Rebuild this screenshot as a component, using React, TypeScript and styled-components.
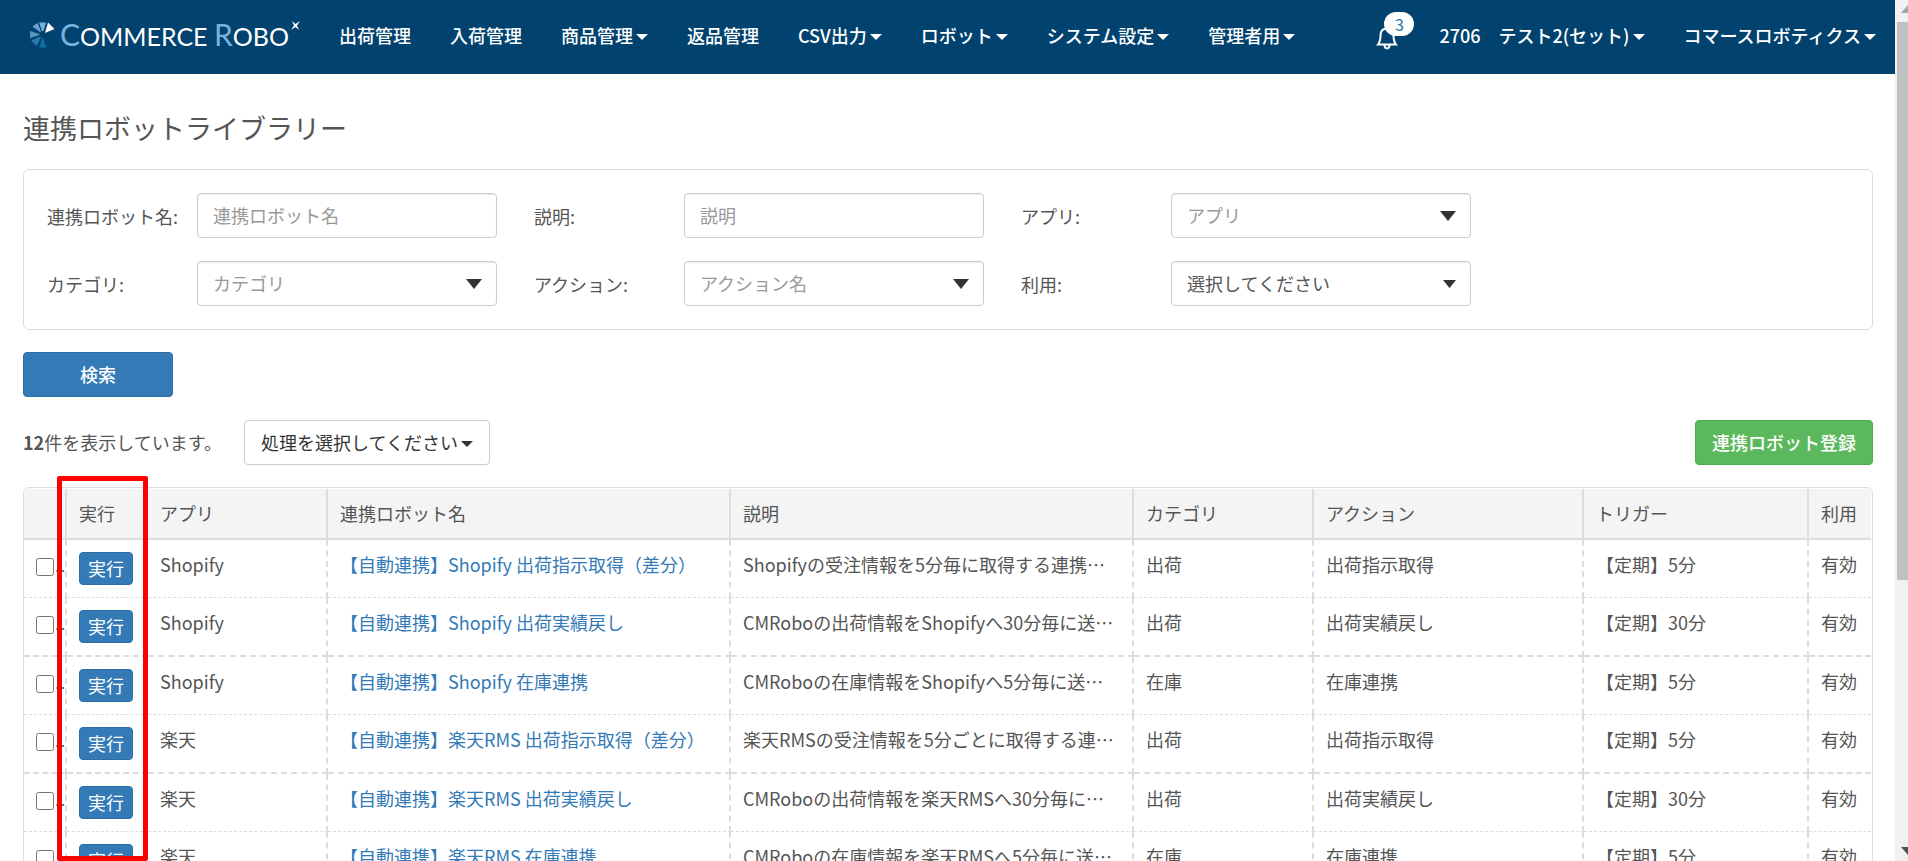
import React from "react";
import styled, { createGlobalStyle, css } from "styled-components";

const GlobalStyle = createGlobalStyle`
  *, *::before, *::after { box-sizing: border-box; }
  html, body { margin: 0; padding: 0; background: #fff; }
  body, button, input, select {
    font-family: "Noto Sans CJK JP", "Noto Sans", sans-serif;
    font-size: 18px;
    line-height: 26px;
    color: #555;
  }
  a { color: #337ab7; text-decoration: none; }
`;

const Shell = styled.div`
  display: grid;
  grid-template-columns: minmax(0, 1fr) 13px;
  height: 100vh;
  overflow: hidden;
`;

const Page = styled.div`
  position: relative;
  overflow: hidden;
`;

const Header = styled.header`
  display: flex;
  align-items: center;
  justify-content: space-between;
  height: 74px;
  padding: 0 19px 5px 29px;
  background: #01426f;
`;

const HeaderGroup = styled.div`
  display: flex;
  align-items: center;
`;

const Logo = styled.a`
  display: flex;
  flex: none;
  align-items: center;
  width: 272px;
  margin-right: 38px;
  color: #fff;
  font-family: Lato, sans-serif;
  font-size: 25px;
  line-height: 30px;
  white-space: nowrap;
`;

const LogoCap = styled.span`
  color: #78b2dc;
  font-size: 30px;
`;

const LogoText = styled.span`
  margin: 0 2px 0 5px;
`;

const Nav = styled.nav`
  display: flex;
  gap: 39px;
`;

const NavItem = styled.a`
  display: flex;
  align-items: center;
  color: #fff;
  font-weight: 500;
  white-space: pre;
`;

const Caret = styled.span`
  width: 0;
  height: 0;
  margin: 4px 0 0 3px;
  border-top: 6px solid currentColor;
  border-right: 6px solid transparent;
  border-left: 6px solid transparent;
`;

const BellButton = styled.button`
  position: relative;
  display: flex;
  width: 22px;
  height: 24px;
  margin: 6px 41px 0 0;
  padding: 0;
  border: 0;
  background: none;
  color: #fff;
`;

const Badge = styled.span`
  position: absolute;
  top: -14px;
  left: 8px;
  width: 30px;
  height: 24px;
  border-radius: 12px;
  background: #fff;
  color: #2b76a8;
  font-size: 16px;
  line-height: 24px;
  text-align: center;
`;

const Main = styled.main`
  padding: 34px 22px 0 23px;
`;

const Title = styled.h1`
  margin: 0 0 22px;
  font-size: 27px;
  font-weight: 400;
  line-height: 39px;
`;

const SearchPanel = styled.form`
  display: grid;
  grid-template-columns: repeat(3, 450px);
  gap: 23px 37px;
  margin-bottom: 22px;
  padding: 23px;
  border: 1px solid #ddd;
  border-radius: 6px;
`;

const Field = styled.div`
  display: grid;
  grid-template-columns: 150px 1fr;
  align-items: center;
`;

const SelectBox = styled.div`
  display: grid;
  align-items: center;

  > * { grid-area: 1 / 1; }
`;

const SelectArrow = styled.svg<{ $small?: boolean }>`
  width: ${(p) => (p.$small ? 13 : 16)}px;
  height: ${(p) => (p.$small ? 8 : 10)}px;
  margin-right: 15px;
  justify-self: end;
  pointer-events: none;
  fill: #333;
`;

const control = css`
  width: 100%;
  height: 45px;
  padding: 0 15px 2px;
  border: 1px solid #ccc;
  border-radius: 4px;
  background: #fff;
  box-shadow: inset 0 1px 1px rgba(0, 0, 0, 0.08);
`;

const TextInput = styled.input`
  ${control}
  &::placeholder { color: #999; opacity: 1; }
`;

const Select = styled.select<{ $muted?: boolean }>`
  ${control}
  appearance: none;
  color: ${(p) => (p.$muted ? "#999" : "#555")};
`;

const Button = styled.button<{ $tone?: "primary" | "success" | "plain"; $small?: boolean; $wide?: boolean }>`
  display: inline-flex;
  align-items: center;
  justify-content: center;
  width: ${(p) => (p.$wide ? "150px" : "auto")};
  height: ${(p) => (p.$small ? 33 : 45)}px;
  padding: 0 ${(p) => (p.$small ? 8 : 16)}px 2px;
  border: 1px solid #2e6da4;
  border-radius: 4px;
  background: #337ab7;
  color: #fff;
  white-space: nowrap;
  font-weight: ${(p) => (p.$small ? 400 : 500)};

  ${(p) => p.$tone === "success" && css`
    border-color: #4cae4c;
    background: #5cb85c;
  `}
  ${(p) => p.$tone === "plain" && css`
    border-color: #ccc;
    background: #fff;
    color: #333;
    font-weight: 400;
  `}
`;

const Toolbar = styled.div`
  display: flex;
  align-items: center;
  margin: 23px 0 22px;
`;

const Count = styled.p`
  width: 221px;
  margin: 0;
  padding-bottom: 2px;
`;

const Spacer = styled.div`
  flex: 1;
`;

const TableFrame = styled.div`
  padding: 1px 1px 0 0;
  border: 1px solid #ddd;
  border-radius: 6px;
`;

const Table = styled.table`
  width: 100%;
  table-layout: fixed;
  border-spacing: 0;
`;

const Col = styled.col<{ $width?: number }>`
  width: ${(p) => (p.$width ? `${p.$width}px` : "auto")};
`;

const HeadCell = styled.th`
  height: 51px;
  padding: 0 12px 2px;
  border: solid #ddd;
  border-width: 0 2px 2px 0;
  background: #f4f4f4;
  font-weight: 400;
  text-align: left;

  &:last-child { border-right: 0; }
`;

const Cell = styled.td`
  padding: 11px 12px 0;
  border: dashed #ddd;
  border-width: 0 2px 1px 0;
  overflow: hidden;
  vertical-align: top;
  white-space: nowrap;

  &:last-child { border-right: 0; }
`;

const ActionCell = styled(Cell)`
  padding-top: 12px;
`;

const Row = styled.tr`
  height: 58px;

  &:nth-child(even) {
    height: 59px;
    ${Cell} { border-bottom-width: 2px; }
  }
`;

const Check = styled.input`
  width: 18px;
  height: 18px;
  margin: 6px 0 0;
  vertical-align: top;
`;

const Dots = styled.span`
  display: inline-block;
  padding-top: 2px;
  font-family: "Liberation Sans", sans-serif;
  line-height: 24px;
  vertical-align: top;
`;

const Highlight = styled.div`
  position: absolute;
  top: 476px;
  bottom: 0;
  left: 57px;
  width: 91px;
  border: 5px solid #f00;
  border-radius: 2px;
  pointer-events: none;
`;

const ScrollTrack = styled.div`
  display: grid;
  grid-template-rows: 22px 558px 1fr 14px;
  overflow: hidden;
  background: #f1f1f1;
`;

const ScrollThumb = styled.div`
  grid-row: 2;
  margin-left: 2px;
  background: #c1c1c1;
`;

const ScrollArrow = styled.svg<{ $down?: boolean }>`
  grid-row: ${(p) => (p.$down ? 4 : 1)};
  width: 13px;
  height: 14px;
  fill: ${(p) => (p.$down ? "#505050" : "#a3a3a3")};
`;

const navItems = [
  { label: "出荷管理" },
  { label: "入荷管理" },
  { label: "商品管理", menu: true },
  { label: "返品管理" },
  { label: "CSV出力", menu: true },
  { label: "ロボット", menu: true },
  { label: "システム設定", menu: true },
  { label: "管理者用", menu: true },
];

const columns: { label: string; width?: number }[] = [
  { label: "", width: 43 },
  { label: "実行", width: 81 },
  { label: "アプリ", width: 180 },
  { label: "連携ロボット名" },
  { label: "説明" },
  { label: "カテゴリ", width: 180 },
  { label: "アクション", width: 270 },
  { label: "トリガー", width: 225 },
  { label: "利用", width: 62 },
];

const robots = [
  ["Shopify", "【自動連携】Shopify 出荷指示取得（差分）", "Shopifyの受注情報を5分毎に取得する連携…", "出荷", "出荷指示取得", "【定期】5分"],
  ["Shopify", "【自動連携】Shopify 出荷実績戻し", "CMRoboの出荷情報をShopifyへ30分毎に送…", "出荷", "出荷実績戻し", "【定期】30分"],
  ["Shopify", "【自動連携】Shopify 在庫連携", "CMRoboの在庫情報をShopifyへ5分毎に送…", "在庫", "在庫連携", "【定期】5分"],
  ["楽天", "【自動連携】楽天RMS 出荷指示取得（差分）", "楽天RMSの受注情報を5分ごとに取得する連…", "出荷", "出荷指示取得", "【定期】5分"],
  ["楽天", "【自動連携】楽天RMS 出荷実績戻し", "CMRoboの出荷情報を楽天RMSへ30分毎に…", "出荷", "出荷実績戻し", "【定期】30分"],
  ["楽天", "【自動連携】楽天RMS 在庫連携", "CMRoboの在庫情報を楽天RMSへ5分毎に送…", "在庫", "在庫連携", "【定期】5分"],
];

function SelectField({ id, label, text, muted }: { id: string; label: string; text: string; muted?: boolean }) {
  return (
    <Field>
      <label htmlFor={id}>{label}:</label>
      <SelectBox>
        <Select id={id} $muted={muted}>
          <option>{text}</option>
        </Select>
        <SelectArrow $small={!muted} viewBox="0 0 16 10" preserveAspectRatio="none" aria-hidden="true">
          <path d="M0 0H16L8 10Z" />
        </SelectArrow>
      </SelectBox>
    </Field>
  );
}

function TextField({ id, label }: { id: string; label: string }) {
  return (
    <Field>
      <label htmlFor={id}>{label}:</label>
      <TextInput id={id} type="text" placeholder={label} />
    </Field>
  );
}

export default function App() {
  return (
    <>
      <GlobalStyle />
      <Shell>
        <Page>
          <Header>
            <HeaderGroup>
              <Logo href="#" aria-label="Commerce Robo">
                <svg width="26" height="27" viewBox="0 0 26 27" aria-hidden="true">
                  <path fill="#78b2dc" d="M10 1.500H17L14.500 10H13Z" />
                  <path fill="#fff" d="M19 1.500L25.500 8L16 12Z" />
                  <path fill="#6aa5d0" d="M3.500 5.500L8.500 2L12 10.500L11 11Z" />
                  <path fill="#5796c2" d="M1 10V17L10.500 14V13Z" />
                  <path fill="#2a79aa" d="M2 19.500L7.500 25L12 16.500L11 15.500Z" />
                  <path fill="#0f6ea3" d="M10.500 26.500H17L14.500 17.500H13Z" />
                </svg>
                <LogoText>
                  <LogoCap>C</LogoCap>OMMERCE <LogoCap>R</LogoCap>OBO
                </LogoText>
                <svg width="9" height="28" viewBox="0 0 9 28" aria-hidden="true">
                  <path fill="#fff" d="M1 0L4.500 3L9 0L6 4.500L8 9L4.500 6L0 9L3 4.500Z" />
                </svg>
              </Logo>
              <Nav>
                {navItems.map((item) => (
                  <NavItem href="#" key={item.label}>
                    {item.label}
                    {item.menu && <Caret />}
                  </NavItem>
                ))}
              </Nav>
            </HeaderGroup>
            <HeaderGroup>
              <BellButton type="button" aria-label="お知らせ">
                <svg width="22" height="24" viewBox="0 0 22 24" fill="none" stroke="currentColor" strokeWidth="2" aria-hidden="true">
                  <path d="M2 18.500C4 16 4.500 14 4.500 9.500C4.500 5 7 2.500 11 2.500C15 2.500 17.500 5 17.500 9.500C17.500 14 18 16 20 18.500Z" />
                  <path d="M8.500 19C8.500 23.500 13.500 23.500 13.500 19" />
                </svg>
                <Badge>3</Badge>
              </BellButton>
              <Nav>
                <NavItem href="#">2706　テスト2(セット)<Caret /></NavItem>
                <NavItem href="#">コマースロボティクス<Caret /></NavItem>
              </Nav>
            </HeaderGroup>
          </Header>
          <Main>
            <Title>連携ロボットライブラリー</Title>
            <SearchPanel id="search">
              <TextField id="name" label="連携ロボット名" />
              <TextField id="description" label="説明" />
              <SelectField id="app" label="アプリ" text="アプリ" muted />
              <SelectField id="category" label="カテゴリ" text="カテゴリ" muted />
              <SelectField id="action" label="アクション" text="アクション名" muted />
              <SelectField id="usage" label="利用" text="選択してください" />
            </SearchPanel>
            <Button type="submit" form="search" $wide>検索</Button>
            <Toolbar>
              <Count><strong>12</strong>件を表示しています。</Count>
              <Button type="button" $tone="plain">処理を選択してください<Caret /></Button>
              <Spacer />
              <Button type="button" $tone="success">連携ロボット登録</Button>
            </Toolbar>
            <TableFrame>
              <Table>
                <colgroup>
                  {columns.map((c, i) => <Col key={i} $width={c.width} />)}
                </colgroup>
                <thead>
                  <tr>
                    {columns.map((c, i) => <HeadCell key={i} scope="col">{c.label}</HeadCell>)}
                  </tr>
                </thead>
                <tbody>
                  {robots.map(([app, name, description, category, action, trigger]) => (
                    <Row key={name}>
                      <ActionCell><Check type="checkbox" aria-label={name} /><Dots aria-hidden="true">…</Dots></ActionCell>
                      <ActionCell><Button type="button" $small>実行</Button></ActionCell>
                      <Cell>{app}</Cell>
                      <Cell><a href="#">{name}</a></Cell>
                      <Cell>{description}</Cell>
                      <Cell>{category}</Cell>
                      <Cell>{action}</Cell>
                      <Cell>{trigger}</Cell>
                      <Cell>有効</Cell>
                    </Row>
                  ))}
                </tbody>
              </Table>
            </TableFrame>
          </Main>
          <Highlight />
        </Page>
        <ScrollTrack aria-hidden="true">
          <ScrollArrow viewBox="0 0 13 14"><path d="M6 13L13 5V13Z" /></ScrollArrow>
          <ScrollThumb />
          <ScrollArrow $down viewBox="0 0 13 14"><path d="M6 0H13V8Z" /></ScrollArrow>
        </ScrollTrack>
      </Shell>
    </>
  );
}
